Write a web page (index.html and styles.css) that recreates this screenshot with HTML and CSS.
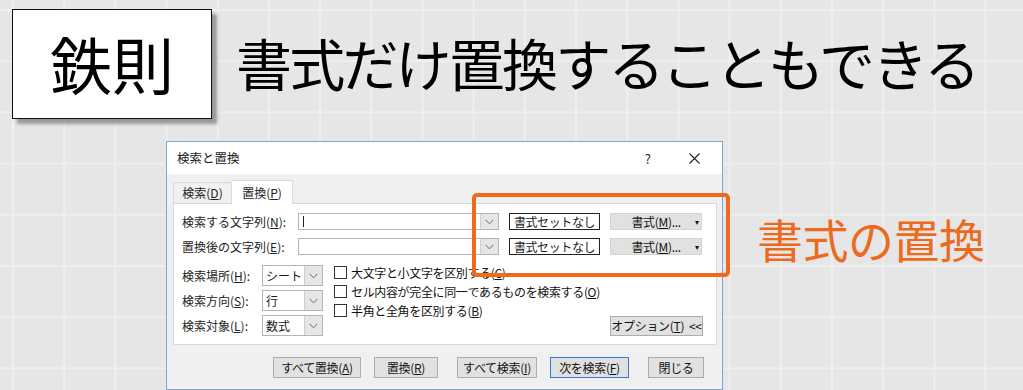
FILE: index.html
```html
<!DOCTYPE html>
<html lang="ja">
<head>
    <meta charset="UTF-8">
    <meta name="viewport" content="width=device-width, initial-scale=1.0">
    <title>書式だけ置換</title>
    <link rel="stylesheet" href="styles.css">
</head>
<body>

    <!-- 見出し -->
    <header class="header">
        <div class="rule-box">鉄則</div>
        <h1 class="heading">書式だけ置換することもできる</h1>
    </header>

    <!-- ダイアログと説明 -->
    <div class="stage">
        <div class="dialog">
            <div class="titlebar">
                <span class="title">検索と置換</span>
                <span class="help">?</span>
                <svg class="close" width="11" height="11" viewBox="0 0 11 11">
                    <path d="M0.5 0.5 L10.5 10.5 M10.5 0.5 L0.5 10.5" stroke="#222" stroke-width="1.1" fill="none"/>
                </svg>
            </div>

            <div class="dialog-body">
                <div class="tabs">
                    <div class="tab">検索(<u>D</u>)</div>
                    <div class="tab active">置換(<u>P</u>)</div>
                </div>

                <div class="panel">
                    <div class="find-row">
                        <span class="label">検索する文字列(<u>N</u>):</span>
                        <div class="combo">
                            <span class="caret"></span>
                            <span class="drop">
                                <svg width="9" height="6" viewBox="0 0 9 6"><path d="M0.5 0.8 L4.5 4.8 L8.5 0.8" stroke="#666" fill="none"/></svg>
                            </span>
                        </div>
                        <div class="preview">書式セットなし</div>
                        <div class="btn fmt">書式(<u>M</u>)...<span class="tri">▾</span></div>
                    </div>
                    <div class="find-row">
                        <span class="label">置換後の文字列(<u>E</u>):</span>
                        <div class="combo">
                            <span class="drop">
                                <svg width="9" height="6" viewBox="0 0 9 6"><path d="M0.5 0.8 L4.5 4.8 L8.5 0.8" stroke="#666" fill="none"/></svg>
                            </span>
                        </div>
                        <div class="preview">書式セットなし</div>
                        <div class="btn fmt">書式(<u>M</u>)...<span class="tri">▾</span></div>
                    </div>

                    <div class="options">
                        <div class="selects">
                            <div class="sel-row">
                                <span class="sel-label">検索場所(<u>H</u>):</span>
                                <div class="select">シート<span class="sel-drop"><svg width="9" height="6" viewBox="0 0 9 6"><path d="M0.5 0.8 L4.5 4.8 L8.5 0.8" stroke="#666" fill="none"/></svg></span></div>
                            </div>
                            <div class="sel-row">
                                <span class="sel-label">検索方向(<u>S</u>):</span>
                                <div class="select">行<span class="sel-drop"><svg width="9" height="6" viewBox="0 0 9 6"><path d="M0.5 0.8 L4.5 4.8 L8.5 0.8" stroke="#666" fill="none"/></svg></span></div>
                            </div>
                            <div class="sel-row">
                                <span class="sel-label">検索対象(<u>L</u>):</span>
                                <div class="select">数式<span class="sel-drop"><svg width="9" height="6" viewBox="0 0 9 6"><path d="M0.5 0.8 L4.5 4.8 L8.5 0.8" stroke="#666" fill="none"/></svg></span></div>
                            </div>
                        </div>

                        <div class="checks">
                            <label class="check"><span class="box"></span>大文字と小文字を区別する(<u>C</u>)</label>
                            <label class="check"><span class="box"></span>セル内容が完全に同一であるものを検索する(<u>O</u>)</label>
                            <label class="check"><span class="box"></span>半角と全角を区別する(<u>B</u>)</label>
                        </div>

                        <div class="btn opt">オプション(<u>T</u>)&nbsp;&nbsp;&lt;&lt;</div>
                    </div>
                </div>

                <div class="actions">
                    <div class="btn w88">すべて置換(<u>A</u>)</div>
                    <div class="btn w64">置換(<u>R</u>)</div>
                    <div class="btn w80 wide-gap">すべて検索(<u>I</u>)</div>
                    <div class="btn w79 default">次を検索(<u>F</u>)</div>
                    <div class="btn w56 wide-gap">閉じる</div>
                </div>
            </div>
        </div>

        <div class="caption">書式の置換</div>

        <!-- 強調枠 -->
        <div class="highlight"></div>
    </div>

</body>
</html>
```

FILE: styles.css
```css
/* 全体 */
body {
    margin: 0;
    width: 1023px;
    height: 390px;
    overflow: hidden;
    font-family: "Noto Sans CJK JP", "Noto Sans", sans-serif;
    color: #000;
    background-color: #e6e6e6;
    background-image:
        linear-gradient(to right, #efefef 2px, transparent 2px),
        linear-gradient(to bottom, #efefef 2px, transparent 2px);
    background-size: 51.2px 51.2px;
    background-position: 12px 9px;
}

/* 見出し */
.header {
    display: flex;
    align-items: center;
    padding: 9px 0 0 12px;
}

.rule-box {
    width: 198px;
    height: 106px;
    border: 1px solid #111;
    background-color: #fff;
    box-shadow: 5px 5px 3px #9a9a9a;
    display: flex;
    align-items: center;
    justify-content: center;
    font-size: 62px;
    line-height: 1;
    padding-bottom: 2px;
    box-sizing: content-box;
}

.heading {
    margin: 0 0 0 24px;
    font-size: 56px;
    font-weight: 400;
    letter-spacing: -2.8px;
    line-height: 1;
    padding-bottom: 4px;
}

/* ダイアログ周り */
.stage {
    position: relative;
    display: flex;
    align-items: flex-start;
    padding-left: 166px;
    margin-top: 22px;
}

.dialog {
    width: 555px;
    height: 247px;
    border: 1px solid #7ea4d4;
    background-color: #f0f0f0;
    font-size: 12px;
    line-height: 1;
    color: #1a1a1a;
}

.titlebar {
    height: 32px;
    background-color: #fff;
    display: flex;
    align-items: center;
    padding: 0 22px 0 10px;
}

.title {
    flex: 1;
    font-size: 12.5px;
}

.help {
    font-size: 13px;
    margin-right: 38px;
}

.dialog-body {
    padding: 7px 5px 0 6px;
}

/* タブ */
.tabs {
    display: flex;
    align-items: flex-end;
    height: 22px;
}

.tab {
    height: 20px;
    width: 57px;
    border: 1px solid #d9d9d9;
    border-bottom: none;
    display: flex;
    align-items: center;
    justify-content: center;
    color: #222;
}

.tab.active {
    height: 23px;
    width: 60px;
    background-color: #fff;
    border-left: none;
    margin-bottom: -1px;
    position: relative;
}

.panel {
    height: 142px;
    border: 1px solid #d9d9d9;
    background-color: #fff;
    padding: 9px 0 0 8px;
    box-sizing: border-box;
}

/* 検索・置換の行 */
.find-row {
    display: flex;
    align-items: center;
    height: 17px;
    margin-bottom: 8px;
}

.label {
    width: 116px;
    color: #222;
}

.combo {
    width: 201px;
    height: 17px;
    border: 1px solid #b4b4b4;
    box-sizing: border-box;
    display: flex;
    align-items: center;
    justify-content: space-between;
    margin-right: 10px;
}

.caret {
    width: 1px;
    height: 11px;
    background-color: #222;
    margin-left: 4px;
}

.drop {
    width: 17px;
    height: 15px;
    margin-left: auto;
    background-color: #e6e6e6;
    border-left: 1px solid #d0d0d0;
    display: flex;
    align-items: center;
    justify-content: center;
}

.preview {
    width: 91px;
    height: 17px;
    border: 1.5px solid #222;
    box-sizing: border-box;
    display: flex;
    align-items: center;
    justify-content: center;
    margin-right: 10px;
    letter-spacing: -0.4px;
}

.btn {
    height: 21px;
    border: 1px solid #adadad;
    background-color: #e1e1e1;
    box-sizing: border-box;
    display: flex;
    align-items: center;
    justify-content: center;
    color: #111;
    white-space: nowrap;
    letter-spacing: -0.3px;
}

.btn.fmt {
    width: 92px;
    height: 17px;
    border-color: #d4d4d4;
    padding-left: 18px;
}

.tri {
    font-size: 8px;
    margin-left: 14px;
}

/* 下段オプション */
.options {
    display: flex;
    align-items: flex-start;
    margin-top: 10px;
}

.selects {
    display: flex;
    flex-direction: column;
    gap: 4px;
}

.sel-row {
    display: flex;
    align-items: center;
    height: 21px;
}

.sel-label {
    width: 80px;
    color: #222;
}

.select {
    width: 61px;
    height: 21px;
    border: 1px solid #b4b4b4;
    box-sizing: border-box;
    display: flex;
    align-items: center;
    padding-left: 3px;
    background-color: #fff;
}

.sel-drop {
    margin-left: auto;
    width: 17px;
    height: 19px;
    background-color: #e6e6e6;
    border-left: 1px solid #cfcfcf;
    display: flex;
    align-items: center;
    justify-content: center;
}

.checks {
    display: flex;
    flex-direction: column;
    gap: 6px;
    margin: 1px 0 0 11px;
}

.check {
    display: flex;
    align-items: center;
    height: 13px;
    letter-spacing: -0.35px;
    color: #111;
}

.box {
    width: 11px;
    height: 11px;
    border: 1px solid #333;
    background-color: #fff;
    margin-right: 4px;
}

.btn.opt {
    width: 93px;
    height: 20px;
    margin: 51px 0 0 auto;
    margin-right: 13px;
}

/* 下部ボタン */
.actions {
    display: flex;
    justify-content: flex-end;
    padding: 12px 13px 0 0;
    gap: 13px;
}

.actions .wide-gap {
    margin-left: 6px;
}

.w88 { width: 88px; }
.w64 { width: 64px; }
.w80 { width: 80px; }
.w79 { width: 79px; }
.w56 { width: 56px; }

.btn.default {
    border: 1.5px solid #2f7bd6;
}

/* 説明文字 */
.caption {
    margin: 74px 0 0 34px;
    font-size: 46px;
    line-height: 1;
    color: #ec6a1e;
    letter-spacing: -0.5px;
}

.highlight {
    position: absolute;
    left: 472px;
    top: 52px;
    width: 250px;
    height: 76px;
    border: 4px solid #f06a1c;
    border-radius: 5px;
}
```
